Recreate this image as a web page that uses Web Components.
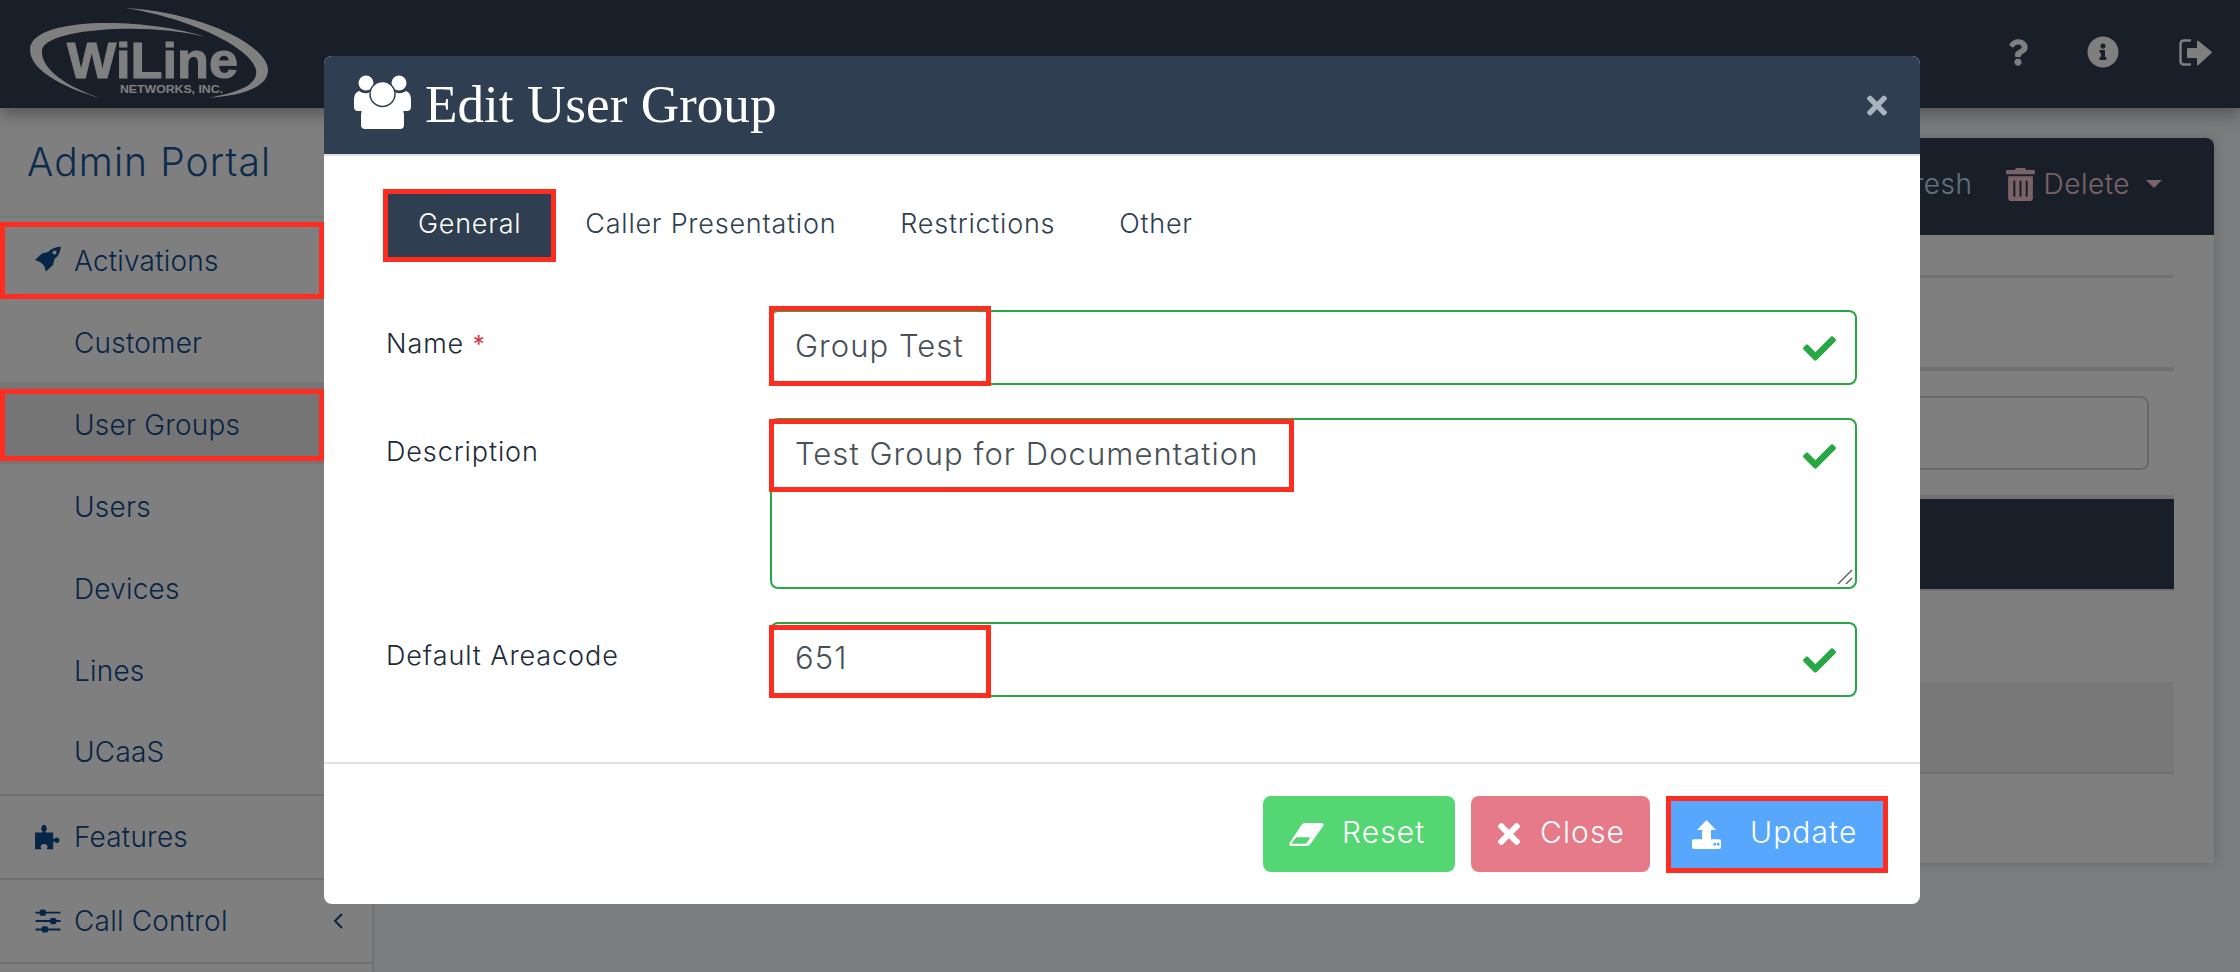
<!DOCTYPE html>
<html>
<head>
<meta charset="utf-8">
<title>Edit User Group</title>
<style>
  html, body { margin: 0; height: 100%; overflow: hidden; }
  body { font-family: Inter, "Noto Sans", sans-serif; font-weight: 300; }
</style>
</head>
<body>
<app-shell>
  <app-topbar slot="top"></app-topbar>
  <app-sidebar slot="side">
    <nav-item icon="rocket">Activations</nav-item>
    <nav-item sub>Customer</nav-item>
    <nav-item sub active>User Groups</nav-item>
    <nav-item sub>Users</nav-item>
    <nav-item sub>Devices</nav-item>
    <nav-item sub>Lines</nav-item>
    <nav-item sub last>UCaaS</nav-item>
    <nav-item icon="puzzle" ruled>Features</nav-item>
    <nav-item icon="sliders" ruled chevron>Call Control</nav-item>
  </app-sidebar>
  <main-card slot="main"></main-card>
  <edit-modal slot="modal" heading="Edit User Group">
    <form-field label="Name" required value="Group Test"></form-field>
    <form-field label="Description" multiline value="Test Group for Documentation"></form-field>
    <form-field label="Default Areacode" value="651"></form-field>
  </edit-modal>
</app-shell>

<script>
  const ICONS = {
    check: ['0 0 512 512', '<path d="M173.898 439.404l-166.4-166.4c-9.997-9.997-9.997-26.206 0-36.204l36.203-36.204c9.997-9.998 26.207-9.998 36.204 0L192 312.69 432.095 72.596c9.997-9.997 26.207-9.997 36.204 0l36.203 36.204c9.997 9.997 9.997 26.206 0 36.204l-294.4 294.401c-9.998 9.997-26.207 9.997-36.204-.001z"/>'],
    times: ['0 0 352 512', '<path d="M242.72 256l100.07-100.07c12.28-12.28 12.28-32.19 0-44.48l-22.24-22.24c-12.28-12.28-32.19-12.28-44.48 0L176 189.28 75.93 89.21c-12.28-12.28-32.19-12.28-44.48 0L9.21 111.45c-12.28 12.28-12.28 32.19 0 44.48L109.28 256 9.21 356.07c-12.28 12.28-12.28 32.19 0 44.48l22.24 22.24c12.28 12.28 32.2 12.28 44.48 0L176 322.72l100.07 100.07c12.28 12.28 32.2 12.28 44.48 0l22.24-22.24c12.28-12.28 12.28-32.19 0-44.48L242.72 256z"/>'],
    question: ['0 0 384 512', '<path d="M202.021 0C122.202 0 70.503 32.703 29.914 91.026c-7.363 10.58-5.093 25.086 5.178 32.874l43.138 32.709c10.373 7.865 25.132 6.026 33.253-4.148 25.049-31.381 43.63-49.449 82.757-49.449 30.764 0 68.816 19.799 68.816 49.631 0 22.552-18.617 34.134-48.993 51.164-35.423 19.86-82.299 44.576-82.299 106.405V320c0 13.255 10.745 24 24 24h72.471c13.255 0 24-10.745 24-24v-5.773c0-42.86 125.268-44.645 125.268-160.627C377.504 66.256 286.902 0 202.021 0zM192 373.459c-38.196 0-69.271 31.075-69.271 69.271 0 38.195 31.075 69.27 69.271 69.27s69.271-31.075 69.271-69.271-31.075-69.27-69.271-69.27z"/>'],
    info: ['0 0 512 512', '<path d="M256 8C119.043 8 8 119.083 8 256c0 136.997 111.043 248 248 248s248-111.003 248-248C504 119.083 392.957 8 256 8zm0 110c23.196 0 42 18.804 42 42s-18.804 42-42 42-42-18.804-42-42 18.804-42 42-42zm56 254c0 6.627-5.373 12-12 12h-88c-6.627 0-12-5.373-12-12v-24c0-6.627 5.373-12 12-12h12v-64h-12c-6.627 0-12-5.373-12-12v-24c0-6.627 5.373-12 12-12h64c6.627 0 12 5.373 12 12v100h12c6.627 0 12 5.373 12 12v24z"/>'],
    signout: ['0 0 33 27', '<path fill="none" stroke="currentColor" stroke-width="2.500" d="M12 1.500H5Q1.500 1.500 1.500 5v17Q1.500 25.500 5 25.500h7"/><path d="M9 9h9V2.500q0-1.500 1.500-.5L32.500 12.500q.8.800 0 1.600L19.500 26q-1.500 1-1.500-.5V19H9q-1 0-1-1v-8q0-1 1-1z"/>'],
    rocket: ['0 0 26 25', '<path fill-rule="evenodd" d="M26 0C21 .5 16 2 13 5.500L7 7 0 13.500 5 15.500 9 19 11 25 18 18.500 19.500 12.500C23.500 9.500 25.500 5 26 0ZM19.500 4a2 2 0 1 1 0 4 2 2 0 0 1 0-4Z"/>'],
    puzzle: ['0 0 26 25', '<path d="M0 8h6.800c.9 0 .9-.9.4-1.400C6.600 6 6.200 5.300 6.200 4.500 6.200 3 7.400 0 9 0s2.800 3 2.800 4.500c0 .8-.4 1.500-1 2.100-.5.500-.5 1.400.4 1.400h7v5.600c0 .9.900.9 1.500.4.600-.6 1.300-1 2-1 1.500 0 2.800 1.100 2.800 2.700s-1.300 2.700-2.800 2.700c-.7 0-1.400-.4-2-1-.6-.5-1.500-.5-1.500.4V25H12.500c-.8 0-.9-.7-.5-1.200.4-.5.600-1 .6-1.600 0-1.500-1.500-2.700-3.500-2.700s-3.500 1.200-3.500 2.700c0 .6.200 1.100.6 1.600.4.500.3 1.200-.5 1.200H0z"/>'],
    sliders: ['0 0 24 24', '<path d="M0 3h24v1.800H0zM0 11.100h24v1.800H0zM0 19.200h24v1.800H0z"/><rect x="4" y="1" width="6" height="6" rx="1.500"/><rect x="14" y="9" width="6" height="6" rx="1.500"/><rect x="6" y="17" width="6" height="6" rx="1.500"/>'],
    trash: ['0 0 448 512', '<path d="M32 464a48 48 0 0 0 48 48h288a48 48 0 0 0 48-48V128H32zm272-256a16 16 0 0 1 32 0v224a16 16 0 0 1-32 0zm-96 0a16 16 0 0 1 32 0v224a16 16 0 0 1-32 0zm-96 0a16 16 0 0 1 32 0v224a16 16 0 0 1-32 0zM432 32H312l-9.4-18.7A24 24 0 0 0 281.1 0H166.8a23.72 23.72 0 0 0-21.4 13.3L136 32H16A16 16 0 0 0 0 48v32a16 16 0 0 0 16 16h416a16 16 0 0 0 16-16V48a16 16 0 0 0-16-16z"/>'],
    users: ['0 0 57 54', '<circle cx="12" cy="8" r="7.500"/><circle cx="45" cy="8" r="7.500"/><path d="M0 24q0-6 5-8 6 4 11 1 1 6 3 10-7 3-9 9H4q-4 0-4-4zM57 24q0-6-5-8-6 4-11 1-1 6-3 10 7 3 9 9h6q4 0 4-4z"/><path d="M11 54q-4 0-4-4V40q0-10 10-13 11 6 23 0 10 3 10 13v10q0 4-4 4z"/><circle cx="28.500" cy="19" r="12.500" stroke="#2f3e50" stroke-width="1.500"/>'],
    eraser: ['0 0 35 23', '<path fill-rule="evenodd" d="M13 1.200Q14 0 16 0H32Q35.500 0 34.500 2.500L21.500 21Q20 23 18 23H3Q-.8 23 .6 20zM7.300 14.300 3.200 19.500Q2.500 20.700 4 20.700H15.700Q17 20.700 18 19.500L21.500 14.300z"/>'],
    upload: ['0 0 29 29', '<path fill-rule="evenodd" d="M14.500 0 24 10H19V19.300H27Q29 19.300 29 21.300V27Q29 29 27 29H2Q0 29 0 27V21.300Q0 19.300 2 19.300H10V10H5zM21.500 23h2.500v2.400h-2.500zM25 23h2.500v2.400H25z"/>'],
  };

  // Small helper, every component is the same few lines
  function shadow(el, html) {
    el.attachShadow({ mode: 'open' }).innerHTML = html;
  }

  class UiIcon extends HTMLElement {
    constructor() {
      super();
      const [box, body] = ICONS[this.getAttribute('name')];
      shadow(this, `
        <style>
          :host { display: inline-flex; flex: none; }
          svg { display: block; width: 100%; height: 100%; fill: currentColor; }
        </style>
        <svg viewBox="${box}">${body}</svg>`);
    }
  }

  class AppShell extends HTMLElement {
    constructor() {
      super();
      shadow(this, `
        <style>
          :host {
            display: grid;
            grid-template-columns: 374px 1fr;
            grid-template-rows: 108px 1fr;
            width: 2240px;
            height: 972px;
            position: relative;
            overflow: hidden;
            background: #f6f8fc;
          }
          .top { grid-column: 1 / -1; display: block; z-index: 1; }
          .backdrop { position: absolute; inset: 0; background: rgba(0, 0, 0, .5); z-index: 2; }
          .modal { position: absolute; left: 324px; top: 56px; width: 1596px; z-index: 3; }
          .mark { position: absolute; border: 5px solid #ff2c20; box-sizing: border-box; z-index: 4; }
        </style>
        <div class="top"><slot name="top"></slot></div>
        <slot name="side"></slot>
        <slot name="main"></slot>
        <div class="backdrop"></div>
        <div class="modal"><slot name="modal"></slot></div>
        <div class="mark" style="left:0;top:222px;width:324px;height:77px"></div>
        <div class="mark" style="left:0;top:389px;width:324px;height:72px"></div>
        <div class="mark" style="left:383px;top:189px;width:173px;height:73px"></div>
        <div class="mark" style="left:769px;top:306px;width:222px;height:80px"></div>
        <div class="mark" style="left:769px;top:419px;width:525px;height:73px"></div>
        <div class="mark" style="left:769px;top:625px;width:222px;height:73px"></div>
        <div class="mark" style="left:1666px;top:796px;width:222px;height:77px"></div>`);
    }
  }

  class AppTopbar extends HTMLElement {
    constructor() {
      super();
      shadow(this, `
        <style>
          :host {
            display: flex;
            align-items: center;
            justify-content: space-between;
            height: 108px;
            background: #303e52;
            color: #fff;
            box-shadow: 0 6px 16px rgba(0, 0, 0, .35);
            padding: 0 28px 0 30px;
            box-sizing: border-box;
          }
          svg.logo { width: 238px; height: 92px; display: block; }
          .tools { display: flex; align-items: center; margin-bottom: 4px; }
          .q { width: 20px; height: 27px; margin-right: 59px; }
          .i { width: 32px; height: 32px; margin-right: 60px; }
          .o { width: 33px; height: 27px; }
        </style>
        <svg class="logo" viewBox="0 0 238 92" fill="#fff">
          <path d="M175 29C120 10 0 7 0 42 0 64 40 82 70 90 40 80 10 62 12 42 15 20 120 14 175 29Z"/>
          <path d="M95 0C170 4 238 37 238 62 238 80 210 88 178 90 210 84 228 77 226 62 222 40 160 10 95 0Z"/>
          <text x="37" y="70" font-family="Liberation Sans" font-weight="700" font-size="50" textLength="171" lengthAdjust="spacingAndGlyphs" stroke="#fff" stroke-width="1">WiLine</text>
          <text x="90" y="85" font-family="Liberation Sans" font-weight="700" font-size="11" textLength="103" lengthAdjust="spacingAndGlyphs">NETWORKS, INC.</text>
        </svg>
        <div class="tools">
          <ui-icon class="q" name="question"></ui-icon>
          <ui-icon class="i" name="info"></ui-icon>
          <ui-icon class="o" name="signout"></ui-icon>
        </div>`);
    }
  }

  class AppSidebar extends HTMLElement {
    constructor() {
      super();
      shadow(this, `
        <style>
          :host {
            display: block;
            background: #fff;
            border-right: 2px solid #e0e0e0;
            box-sizing: border-box;
            color: #17569b;
          }
          h1 {
            margin: 0;
            height: 110px;
            box-sizing: border-box;
            padding: 31px 0 0 27px;
            font-size: 39px;
            letter-spacing: 1.1px;
            line-height: 46px;
            font-weight: 300;
            border-bottom: 2px solid #eee;
          }
        </style>
        <h1>Admin Portal</h1>
        <slot></slot>`);
    }
  }

  class NavItem extends HTMLElement {
    constructor() {
      super();
      const icon = this.getAttribute('icon');
      const chevron = this.hasAttribute('chevron');
      shadow(this, `
        <style>
          :host {
            display: flex;
            align-items: center;
            height: 82px;
            box-sizing: border-box;
            padding: 3px 0 0 74px;
            font-size: 28px;
            letter-spacing: .2px;
            color: #0f4a8c;
            position: relative;
          }
          :host([active]) { background: #ebebeb; }
          :host([last]) { height: 86px; padding-bottom: 4px; border-bottom: 2px solid #e0e0e0; }
          :host([ruled]) { height: 84px; padding-top: 0; border-bottom: 2px solid #e0e0e0; }
          .ico { position: absolute; left: 35px; top: 50%; transform: translateY(-50%); width: 26px; height: 25px; display: flex; align-items: center; }
          .ico ui-icon { width: 26px; height: 25px; }
          .chev { position: absolute; left: 333px; top: 50%; transform: translateY(-50%); width: 10px; height: 16px; }
        </style>
        ${icon ? `<span class="ico"><ui-icon name="${icon}"></ui-icon></span>` : ''}
        <span><slot></slot></span>
        ${chevron ? '<svg class="chev" viewBox="0 0 10 16" fill="none" stroke="currentColor" stroke-width="2"><path d="M9 1L2 8l7 7"/></svg>' : ''}`);
    }
  }

  class MainCard extends HTMLElement {
    constructor() {
      super();
      shadow(this, `
        <style>
          :host {
            display: block;
            margin: 30px 26px 0;
            height: 725px;
            background: #fff;
            border-radius: 8px 8px 0 0;
            box-shadow: 0 0 12px rgba(0, 0, 0, .18);
          }
          header {
            display: flex;
            justify-content: flex-end;
            align-items: center;
            height: 97px;
            box-sizing: border-box;
            background: #303e52;
            border-radius: 8px 8px 0 0;
            padding: 0 52px 5px 0;
            font-size: 28px;
            letter-spacing: .5px;
          }
          .act { display: flex; align-items: center; }
          .refresh { color: #bbe6ff; margin-right: 33px; }
          .delete { color: #f4c4cc; }
          .delete ui-icon { width: 29px; height: 33px; margin-right: 9px; }
          .caret { width: 0; height: 0; border: 8px solid transparent; border-top-color: currentColor; border-bottom: 0; margin-left: 16px; }
          .body { padding: 40px 40px 0; }
          hr { border: 0; background: #e2e2e2; }
          .thin { height: 3px; margin: 0 0 89px; }
          .thick { height: 4px; margin: 0 0 25px; }
          .search { height: 74px; margin-right: 25px; border: 2px solid #cdd1d6; border-radius: 8px; box-sizing: border-box; margin-bottom: 25px; }
          .thead { height: 90px; background: #303e52; border-top: 4px solid #e2e2e2; border-bottom: 2px solid #dcdde0; margin-bottom: 91px; }
          .row { height: 92px; box-sizing: border-box; background: #f0f0f0; border-bottom: 2px solid #dedede; }
        </style>
        <header>
          <span class="act refresh">Refresh</span>
          <span class="act delete"><ui-icon name="trash"></ui-icon>Delete<span class="caret"></span></span>
        </header>
        <div class="body">
          <hr class="thin">
          <hr class="thick">
          <div class="search"></div>
          <div class="thead"></div>
          <div class="row"></div>
        </div>`);
    }
  }

  class EditModal extends HTMLElement {
    constructor() {
      super();
      shadow(this, `
        <style>
          :host {
            display: block;
            background: #fff;
            border-radius: 8px;
            overflow: hidden;
            color: #2f3e50;
          }
          header {
            display: flex;
            align-items: center;
            height: 98px;
            background: #2f3e50;
            border-bottom: 2px solid #dee2e6;
            color: #fff;
            padding: 0 30px;
          }
          header ui-icon.u { width: 57px; height: 54px; margin: 0 14px 6px 0; }
          h2 { margin: 0 0 2px; flex: 1; font: 400 53.2px "Liberation Serif", serif; }
          header ui-icon.x { width: 20px; height: 29px; color: #a9b3bd; margin-right: 3px; }
          .body { padding: 35px 63px 65px 62px; }
          .tabs { display: flex; align-items: center; height: 68px; margin: 0 0 51px; font-size: 27px; letter-spacing: .75px; }
          .tab { padding: 0 32px; line-height: 66px; height: 68px; border-radius: 6px; }
          .tab.on { background: #2f3e50; color: #fff; padding: 0 32px; }
          .fields { display: flex; flex-direction: column; gap: 33px; }
          footer {
            display: flex;
            justify-content: flex-end;
            gap: 16px;
            border-top: 2px solid #dee2e6;
            padding: 32px 32px 32px 0;
          }
        </style>
        <header>
          <ui-icon class="u" name="users"></ui-icon>
          <h2>${this.getAttribute('heading')}</h2>
          <ui-icon class="x" name="times"></ui-icon>
        </header>
        <div class="body">
          <div class="tabs">
            <span class="tab on">General</span>
            <span class="tab">Caller Presentation</span>
            <span class="tab">Restrictions</span>
            <span class="tab">Other</span>
          </div>
          <div class="fields"><slot></slot></div>
        </div>
        <footer>
          <action-button color="#54d672" icon="eraser" iw="35" ih="23" pad="26" gap="18" wide="192">Reset</action-button>
          <action-button color="#e77a88" icon="times" iw="22" ih="32" pad="27" gap="20" wide="179">Close</action-button>
          <action-button color="#57a7ff" icon="upload" iw="29" ih="29" pad="26" gap="29" wide="222">Update</action-button>
        </footer>`);
    }
  }

  class FormField extends HTMLElement {
    constructor() {
      super();
      const multi = this.hasAttribute('multiline');
      shadow(this, `
        <style>
          :host { display: grid; grid-template-columns: 384px 1fr; }
          label { font-size: 27px; letter-spacing: .9px; line-height: 30px; padding-top: 19px; color: #1d2a38; font-weight: 300; }
          b { color: #d9343f; font-weight: 400; font-size: 24px; }
          .box {
            position: relative;
            height: ${multi ? 171 : 75}px;
            box-sizing: border-box;
            border: 2px solid #28a745;
            border-radius: 8px;
            padding: 0 0 0 23px;
            font-size: 31px;
            letter-spacing: 1.05px;
            line-height: 68px;
            color: #495057;
          }
          ui-icon.ok { position: absolute; right: 19px; top: 20px; width: 33px; height: 33px; color: #28a745; }
          .grip { position: absolute; right: 2px; bottom: 2px; width: 16px; height: 16px; }
        </style>
        <label>${this.getAttribute('label')}${this.hasAttribute('required') ? ' <b>*</b>' : ''}</label>
        <div class="box">
          ${this.getAttribute('value')}
          <ui-icon class="ok" name="check"></ui-icon>
          ${multi ? '<svg class="grip" viewBox="0 0 16 16" stroke="#666" stroke-width="1.500"><path d="M1 15L15 1M9 15l6-6"/></svg>' : ''}
        </div>`);
    }
  }

  class ActionButton extends HTMLElement {
    constructor() {
      super();
      const attr = (n) => this.getAttribute(n);
      shadow(this, `
        <style>
          :host {
            display: flex;
            align-items: center;
            gap: ${attr('gap')}px;
            height: 76px;
            width: ${attr('wide')}px;
            padding-left: ${attr('pad')}px;
            box-sizing: border-box;
            background: ${attr('color')};
            color: #fff;
            border-radius: 8px;
            font-size: 30px;
            letter-spacing: 1.1px;
          }
          span { margin-bottom: 4px; }
          ui-icon { width: ${attr('iw')}px; height: ${attr('ih')}px; }
        </style>
        <ui-icon name="${attr('icon')}"></ui-icon>
        <span><slot></slot></span>`);
    }
  }

  customElements.define('ui-icon', UiIcon);
  customElements.define('app-shell', AppShell);
  customElements.define('app-topbar', AppTopbar);
  customElements.define('app-sidebar', AppSidebar);
  customElements.define('nav-item', NavItem);
  customElements.define('main-card', MainCard);
  customElements.define('edit-modal', EditModal);
  customElements.define('form-field', FormField);
  customElements.define('action-button', ActionButton);
</script>
</body>
</html>
